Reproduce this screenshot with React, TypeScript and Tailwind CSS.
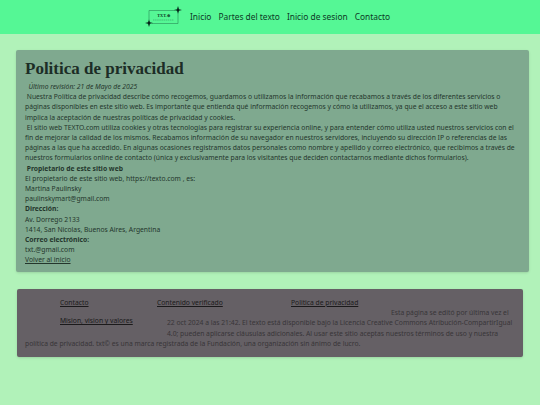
function Logo() {
    return (
        <svg width="40" height="34" viewBox="0 0 40 34" className="shrink-0">
            <path d="M5 20V10.5H31M34 13.5V23.5H8" fill="none" stroke="#2a8a58" strokeWidth="0.6" />
            <path d="M34 6 L35 9.2 L38 10 L35 10.8 L34 14 L33 10.8 L30 10 L33 9.2Z" fill="#06251a" />
            <path d="M5 19.5 L6 22.2 L9 23 L6 23.8 L5 27 L4 23.8 L1 23 L4 22.2Z" fill="#06251a" />
            <text x="19.5" y="17" textAnchor="middle" fontSize="4.2" fontWeight="700" fontFamily="'Liberation Serif', serif" fill="#0b3a26">
                TXT.⊕
            </text>
            <path d="M9 20H30" stroke="#2a8a58" strokeWidth="0.5" strokeDasharray="1.5 0.6" />
        </svg>
    )
}

export default function App() {
    return (
        <div className="min-h-[405px] bg-[#b1f2b9] pb-[48px] font-['Noto_Sans',sans-serif] text-[6.75px] leading-[10.2px] text-[#24362c]">
            <header className="flex h-[34px] items-center bg-[#55f795] pl-[144px]">
                <Logo />
                <nav className="ml-[6px] flex gap-[7px] text-[8.4px] leading-[12px] text-[#0d3a26]">
                    <a>Inicio</a>
                    <a>Partes del texto</a>
                    <a>Inicio de sesion</a>
                    <a>Contacto</a>
                </nav>
            </header>

            <main className="ml-[16px] mr-[11px] mt-[16px] h-[222px] rounded-[2px] bg-[#7fa98f] px-[9px] pt-[7px] shadow-sm">
                <h1 className="mb-[1px] font-['Liberation_Serif',serif] text-[17px] font-bold leading-[24px] text-[#1c2d26]">
                    Politica de privacidad
                </h1>
                <p><i>&nbsp;&nbsp;Último revisión: 21 de Mayo de 2025</i></p>
                <p>
                    &nbsp;Nuestra Política de privacidad describe cómo recogemos, guardamos o utilizamos la información que recabamos a través de los diferentes servicios o páginas disponibles en este sitio web. Es importante que entienda qué información recogemos y cómo la utilizamos, ya que el acceso a este sitio web implica la aceptación de nuestras políticas de privacidad y cookies.
                </p>
                <p>
                    &nbsp;El sitio web TEXTO.com utiliza cookies y otras tecnologías para registrar su experiencia online, y para entender cómo utiliza usted nuestros servicios con el fin de mejorar la calidad de los mismos. Recabamos información de su navegador en nuestros servidores, incluyendo su dirección IP o referencias de las páginas a las que ha accedido. En algunas ocasiones registramos datos personales como nombre y apellido y correo electrónico, que recibimos a través de nuestros formularios online de contacto (única y exclusivamente para los visitantes que deciden contactarnos mediante dichos formularios).
                </p>
                <p className="font-bold">&nbsp;Propietario de este sitio web</p>
                <p>El propietario de este sitio web, https://texto.com , es:</p>
                <p>Martina Paulinsky</p>
                <p>paulinskymart@gmail.com</p>
                <p className="font-bold">Dirección:</p>
                <p>Av. Dorrego 2133</p>
                <p>1414, San Nicolas, Buenos Aires, Argentina</p>
                <p className="font-bold">Correo electrónico:</p>
                <p>txt.@gmail.com</p>
                <a className="underline">Volver al inicio</a>
            </main>

            <footer className="ml-[17px] mr-[17px] mt-[17px] h-[68px] rounded-[2px] bg-[#656065] pl-[8px] pr-[8px] pt-[9px] text-[#383538] shadow-sm">
                <div className="float-left mb-[7px] ml-[35px] w-[97px]"><a className="text-[#1b1a1b] underline">Contacto</a></div>
                <div className="float-left mb-[7px] w-[134px]"><a className="text-[#1b1a1b] underline">Contenido verificado</a></div>
                <div className="float-left mb-[7px] w-[100px]"><a className="text-[#1b1a1b] underline">Politica de privacidad</a></div>
                <div className="float-left clear-left ml-[35px] h-[20px] w-[107px] pt-[1px]"><a className="text-[#1b1a1b] underline">Mision, vision y valores</a></div>
                <p>
                    <br />
                    Esta página se editó por última vez el 22 oct 2024 a las 21:42. El texto está disponible bajo la Licencia Creative Commons Atribución-CompartirIgual 4.0; pueden aplicarse cláusulas adicionales. Al usar este sitio aceptas nuestros términos de uso y nuestra política de privacidad. txt© es una marca registrada de la Fundación, una organización sin ánimo de lucro.
                </p>
            </footer>
        </div>
    )
}
